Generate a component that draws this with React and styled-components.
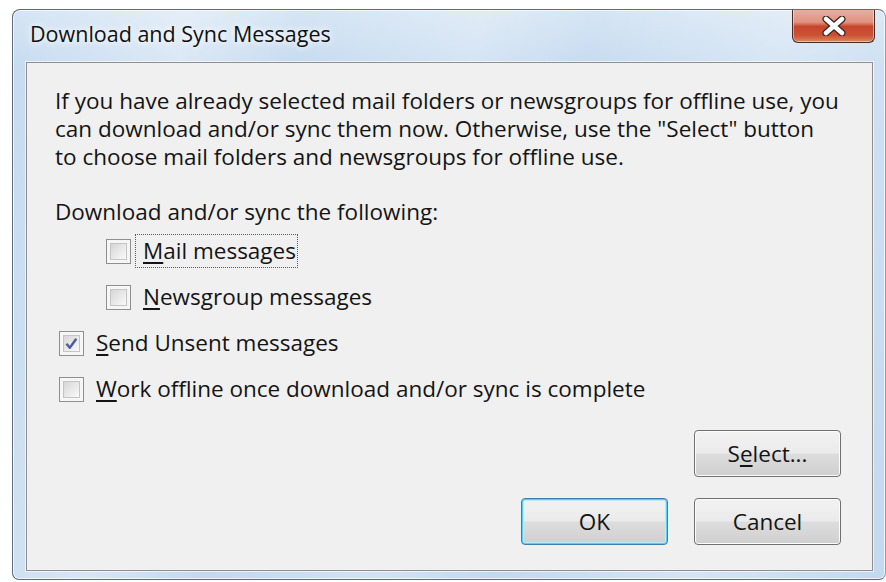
import React from "react";
import styled, { createGlobalStyle } from "styled-components";

const Global = createGlobalStyle`
  html, body {
    margin: 0;
    padding: 0;
    background: #ffffff;
    overflow: hidden;
  }
  body {
    font-family: "Open Sans", "Noto Sans", "Liberation Sans", sans-serif;
  }
`;

const Window = styled.div`
  margin: 9px 0 0 12px;
  width: 874px;
  height: 571px;
  box-sizing: border-box;
  border: 1px solid #5f6b78;
  border-right-color: #8aa0b6;
  border-radius: 8px 8px 7px 7px;
  background:
    linear-gradient(100deg, rgba(255,255,255,0) 0%, rgba(255,255,255,0.35) 18%, rgba(255,255,255,0) 30%,
      rgba(255,255,255,0.25) 48%, rgba(255,255,255,0) 60%, rgba(255,255,255,0.3) 80%, rgba(255,255,255,0) 100%),
    linear-gradient(to bottom, #d6e5f4 0%, #c6dbf0 10%, #c3d9ef 100%);
  box-shadow: inset 0 0 0 1px rgba(255,255,255,0.7);
  display: flex;
  flex-direction: column;
  overflow: hidden;
`;

const TitleBar = styled.div`
  height: 52px;
  flex: none;
  display: flex;
  align-items: flex-start;
  justify-content: space-between;
  padding-left: 17px;
`;

const Title = styled.div`
  margin-top: 9px;
  font-size: 21.5px;
  color: #111;
  text-shadow: 0 0 6px rgba(255,255,255,0.95), 0 0 10px rgba(255,255,255,0.8);
`;

const CloseButton = styled.div`
  width: 83px;
  height: 34px;
  margin-top: -1px;
  margin-right: 10px;
  box-sizing: border-box;
  border: 1px solid #4a2a26;
  border-top: none;
  border-radius: 0 0 6px 6px;
  background: linear-gradient(to bottom, #eab0a0 0%, #e09280 40%, #c6462d 53%, #cc5234 80%, #d98a5f 100%);
  box-shadow: inset 0 0 0 1px rgba(255,255,255,0.45);
  display: flex;
  align-items: center;
  justify-content: center;
`;

const Client = styled.div`
  flex: 1;
  margin: 0 12px 8px 13px;
  box-sizing: border-box;
  border: 1px solid #8d8f91;
  outline: 1px solid rgba(255,255,255,0.6);
  background: #f0f0f0;
  padding: 24px 31px 0 28px;
  display: flex;
  flex-direction: column;
  color: #141414;
  font-size: 22.5px;
  line-height: 28px;
`;

const Paragraph = styled.p`
  margin: 0;
`;

const Heading = styled.div`
  margin-top: 27px;
`;

const Options = styled.div`
  display: flex;
  flex-direction: column;
  gap: 18px;
  margin-top: 11px;
`;

const Row = styled.label`
  display: flex;
  align-items: center;
  height: 28px;
  padding-left: ${(p) => p.$indent}px;
  gap: 4px;
`;

const Box = styled.span`
  width: 25px;
  height: 25px;
  flex: none;
  box-sizing: border-box;
  border: 1px solid #8e8f8f;
  background: #f6f6f6;
  padding: 3px;
  display: flex;
`;

const BoxInner = styled.span`
  flex: 1;
  border: 1px solid #c4c4c4;
  background: linear-gradient(135deg, #d6d6d6 0%, #e8e8e8 50%, #fafafa 100%);
  display: flex;
  align-items: center;
  justify-content: center;
`;

const LabelText = styled.span`
  padding: 2px 1px 2px 7px;
  border: 1px dotted ${(p) => (p.$focused ? "#5a5a5a" : "transparent")};
  line-height: 28px;
`;

const Key = styled.span`
  text-decoration: underline;
  text-decoration-thickness: 1.5px;
  text-underline-offset: 3px;
`;

const Buttons = styled.div`
  display: flex;
  flex-direction: column;
  align-items: flex-end;
  margin-top: 27px;
  gap: 21px;
`;

const ButtonRow = styled.div`
  display: flex;
  gap: 26px;
`;

const Button = styled.div`
  width: 147px;
  height: 47px;
  box-sizing: border-box;
  border: 1px solid ${(p) => (p.$default ? "#3c7fb1" : "#707070")};
  border-radius: 4px;
  background: linear-gradient(to bottom, #f2f2f2 0%, #ebebeb 48%, #dddddd 52%, #cfcfcf 100%);
  box-shadow: ${(p) =>
    p.$default
      ? "inset 0 0 0 1px #48d5f9, inset 0 0 0 2px #bde9f8"
      : "inset 0 0 0 1px #fcfcfc"};
  display: flex;
  align-items: center;
  justify-content: center;
  font-size: 22.5px;
  color: #141414;
`;

function Check({ checked }) {
  return (
    <Box>
      <BoxInner>
        {checked && (
          <svg width="13" height="13" viewBox="0 0 13 13">
            <path
              d="M1.5 6.8 L4.8 10.8 L11.3 1.8"
              fill="none"
              stroke="#4b5e98"
              strokeWidth="2.4"
              strokeLinejoin="round"
            />
          </svg>
        )}
      </BoxInner>
    </Box>
  );
}

function Option({ indent, checked, focused, keyChar, rest }) {
  return (
    <Row $indent={indent}>
      <Check checked={checked} />
      <LabelText $focused={focused}>
        <Key>{keyChar}</Key>
        {rest}
      </LabelText>
    </Row>
  );
}

export default function App() {
  return (
    <>
      <Global />
      <Window>
        <TitleBar>
          <Title>Download and Sync Messages</Title>
          <CloseButton>
            <svg width="30" height="20" viewBox="0 0 30 20">
              <path
                d="M7 3 L23 17 M23 3 L7 17"
                stroke="#3d2420"
                strokeWidth="7"
                strokeLinecap="round"
              />
              <path
                d="M7 3 L23 17 M23 3 L7 17"
                stroke="#ffffff"
                strokeWidth="4.5"
                strokeLinecap="round"
              />
            </svg>
          </CloseButton>
        </TitleBar>
        <Client>
          <Paragraph>
            If you have already selected mail folders or newsgroups for offline use, you
            <br />
            can download and/or sync them now. Otherwise, use the "Select" button
            <br />
            to choose mail folders and newsgroups for offline use.
          </Paragraph>
          <Heading>Download and/or sync the following:</Heading>
          <Options>
            <Option indent={51} focused keyChar="M" rest="ail messages" />
            <Option indent={51} keyChar="N" rest="ewsgroup messages" />
            <Option indent={4} checked keyChar="S" rest="end Unsent messages" />
            <Option
              indent={4}
              keyChar="W"
              rest="ork offline once download and/or sync is complete"
            />
          </Options>
          <Buttons>
            <Button>
              S<Key>e</Key>lect...
            </Button>
            <ButtonRow>
              <Button $default>OK</Button>
              <Button>Cancel</Button>
            </ButtonRow>
          </Buttons>
        </Client>
      </Window>
    </>
  );
}
